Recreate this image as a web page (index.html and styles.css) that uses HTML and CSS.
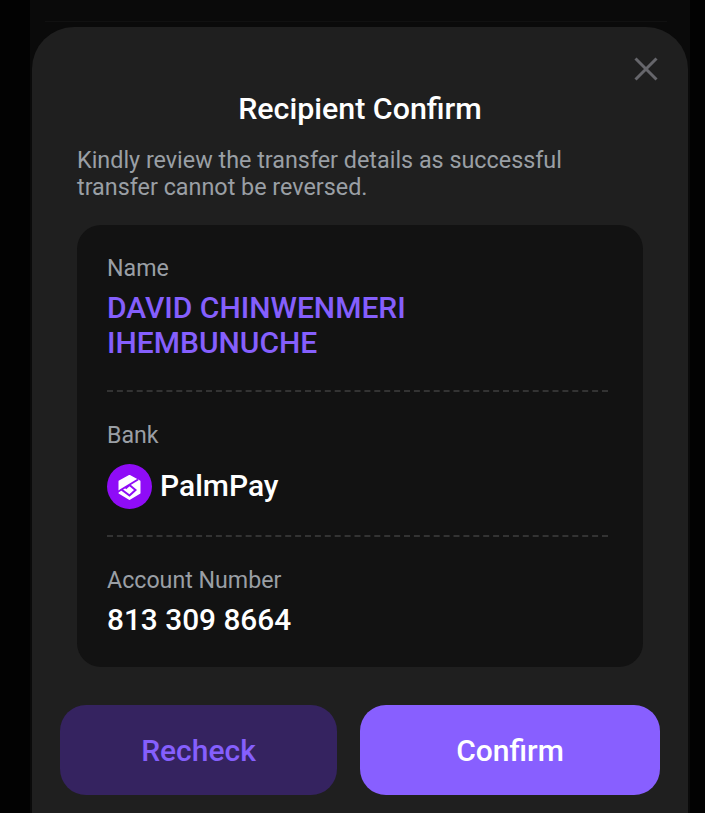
FILE: index.html
```html
<!DOCTYPE html>
<html lang="en">
<head>
    <meta charset="UTF-8">
    <meta name="viewport" content="width=device-width, initial-scale=1.0">
    <title>Recipient Confirm</title>
    <link rel="stylesheet" href="styles.css">
</head>
<body>
    <div class="backdrop">
        <div class="topline"></div>
        <div class="modal">
            <button class="close" type="button" aria-label="Close">
                <svg width="24" height="24" viewBox="0 0 24 24"><path d="M1.5 1.5L22.5 22.5M22.5 1.5L1.5 22.5"/></svg>
            </button>
            <h1 class="title">Recipient Confirm</h1>
            <p class="intro">Kindly review the transfer details as successful transfer cannot be reversed.</p>
            <div class="details">
                <div class="row">
                    <div class="label">Name</div>
                    <div class="name">DAVID CHINWENMERI<br>IHEMBUNUCHE</div>
                </div>
                <div class="row row-bank">
                    <div class="label">Bank</div>
                    <div class="bank">
                        <svg class="bank-logo" width="45" height="45" viewBox="0 0 45 45">
                            <circle cx="22.5" cy="22.5" r="22.5" fill="#8f0cf7"/>
                            <path d="M22.5 12L32.5 17.5V29L22.5 35L12.5 29V17.5Z" fill="#fff" stroke="#fff" stroke-width="2" stroke-linejoin="round"/>
                            <path d="M31 15.5L14.5 25.5L22.5 31.5L28.5 26L22.5 21L18.5 24.5M14.5 25.5L10.5 28" fill="none" stroke="#8f0cf7" stroke-width="2"/>
                        </svg>
                        <span class="bank-name">PalmPay</span>
                    </div>
                </div>
                <div class="row">
                    <div class="label">Account Number</div>
                    <div class="account">813 309 8664</div>
                </div>
            </div>
            <div class="actions">
                <button class="btn btn-recheck" type="button">Recheck</button>
                <button class="btn btn-confirm" type="button">Confirm</button>
            </div>
        </div>
    </div>
</body>
</html>
```

FILE: styles.css
```css
html, body {
    margin: 0;
    height: 813px;
    overflow: hidden;
    background-color: #020202;
    font-family: Roboto, "Liberation Sans", sans-serif;
}
.backdrop {
    margin-left: 30px;
    width: 660px;
    height: 813px;
    background-color: #0a0a0a;
    box-sizing: border-box;
    overflow: hidden;
}
.topline {
    height: 21px;
    margin: 0 23px 5px 15px;
    border-bottom: 1px solid #111;
}
.modal {
    position: relative;
    box-sizing: border-box;
    width: 656px;
    height: 830px;
    margin-left: 2px;
    padding: 64px 28px 0;
    background-color: #1f1f1f;
    border-radius: 42px;
}
.close {
    position: absolute;
    top: 30px;
    right: 30px;
    padding: 0;
    border: none;
    background: none;
    line-height: 0;
}
.close path {
    stroke: #66666b;
    stroke-width: 3;
    fill: none;
}
.title {
    margin: 0;
    font-size: 30.4px;
    line-height: 36px;
    font-weight: 500;
    text-align: center;
    color: #fff;
}
.intro {
    margin: 20px 60px 0 17px;
    font-size: 23.35px;
    line-height: 27px;
    color: #9a9fa5;
}
.details {
    margin: 24px 17px 0;
    padding: 29px 35px 0 30px;
    height: 442px;
    box-sizing: border-box;
    background-color: #121212;
    border-radius: 24px;
}
.row {
    border-bottom: 2px dashed #333;
    padding-bottom: 30px;
    margin-bottom: 29px;
}
.row-bank {
    padding-bottom: 26px;
}
.row:last-child {
    border-bottom: none;
    padding-bottom: 0;
    margin-bottom: 0;
}
.label {
    font-size: 23.2px;
    line-height: 28px;
    color: #9a9fa5;
}
.name {
    margin-top: 8px;
    font-size: 30px;
    line-height: 35px;
    font-weight: 500;
    color: #855ffd;
}
.bank {
    display: flex;
    align-items: center;
    gap: 8px;
    margin-top: 15px;
    font-size: 30px;
    font-weight: 500;
    color: #fff;
}
.bank-name {
    margin-bottom: 2px;
}
.account {
    margin-top: 8px;
    font-size: 29.8px;
    line-height: 35px;
    font-weight: 500;
    color: #fff;
}
.actions {
    display: flex;
    gap: 23px;
    margin-top: 38px;
}
.btn {
    height: 90px;
    border: none;
    border-radius: 26px;
    font-family: inherit;
    font-size: 30px;
    font-weight: 500;
}
.btn-recheck {
    width: 277px;
    background-color: #352360;
    color: #855ffd;
}
.btn-confirm {
    width: 300px;
    background-color: #885fff;
    color: #fff;
}
```
